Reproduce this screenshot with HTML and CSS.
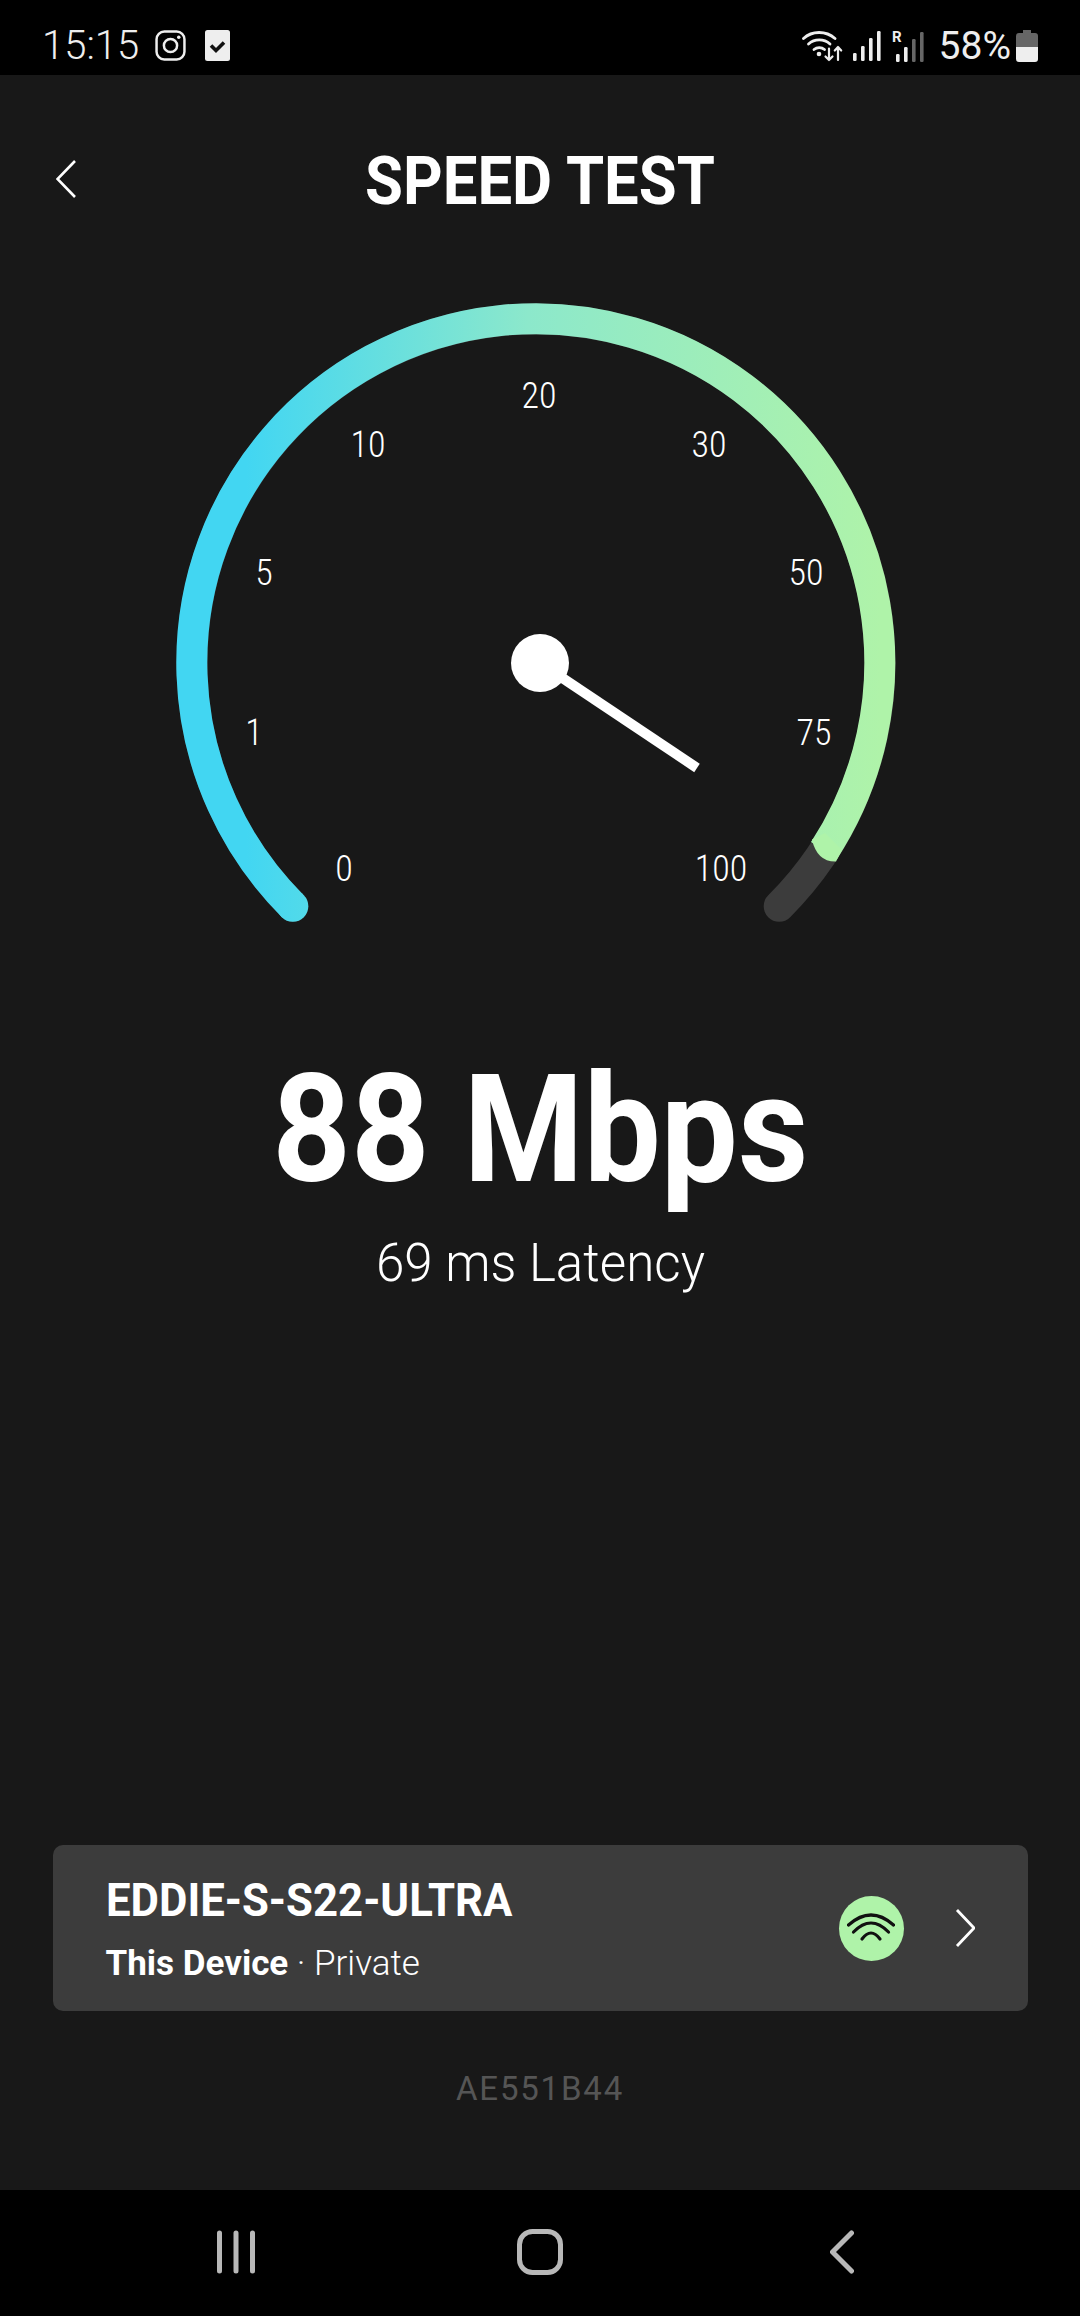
FILE: index.html
```html
<!DOCTYPE html>
<html lang="en">
<head>
  <meta charset="UTF-8">
  <title>Speed Test</title>
  <meta name="viewport" content="width=device-width, initial-scale=1.0">
  <link rel="stylesheet" href="styles.css">
</head>
<body>
  <div class="screen">
    <div class="status-bar">
      <span class="clock">15:15</span>
      <svg class="insta" viewBox="0 0 30 30"><rect x="1.500" y="1.500" width="27" height="27" rx="7.500" fill="none" stroke="#eee" stroke-width="2.400"/><circle cx="15" cy="15" r="6.400" fill="none" stroke="#eee" stroke-width="2.400"/><circle cx="23" cy="7" r="1.700" fill="#eee"/></svg>
      <svg class="check" viewBox="0 0 25 31"><rect width="25" height="31" rx="2.500" fill="#eee"/><path d="M6 15.500l5 5 8-8" fill="none" stroke="#111" stroke-width="3.600"/></svg>
      <div class="status-right">
        <svg class="wifi" viewBox="0 0 42 32">
          <g fill="none" stroke="#eee" stroke-width="2.800" stroke-linecap="round">
            <path d="M1.500 8.500C10 .5 24 .5 33 8.500"/>
            <path d="M6.500 14C12.500 8.500 22 8.500 28 14"/>
            <path d="M12 19.500C15 17 19.500 17 22.500 19.500"/>
          </g>
          <circle cx="17" cy="24" r="2.300" fill="#eee"/>
          <g fill="none" stroke="#eee" stroke-width="2.200" stroke-linecap="round" stroke-linejoin="round">
            <path d="M27 18.500V30M23.500 26.500L27 30l3.500-3.500"/>
            <path d="M36 30V17M32.800 20.500L36 17l3.200 3.500"/>
          </g>
        </svg>
        <svg class="signal" viewBox="0 0 28 30" fill="#eee"><rect x="0" y="22" width="3.600" height="8" rx="1.200"/><rect x="8" y="15" width="3.600" height="15" rx="1.200"/><rect x="16" y="7" width="3.600" height="23" rx="1.200"/><rect x="24" y="0" width="3.600" height="30" rx="1.200"/></svg>
        <svg class="signal-r" viewBox="0 -6 32 38">
          <text x="0" y="12" class="roam">R</text>
          <g fill="#eee"><rect x="4" y="24" width="3.600" height="8" rx="1.200"/><rect x="12" y="17" width="3.600" height="15" rx="1.200"/></g>
          <g fill="#666"><rect x="20" y="9" width="3.600" height="23" rx="1.200"/><rect x="28" y="2" width="3.600" height="30" rx="1.200"/></g>
        </svg>
        <span class="battery-text">58%</span>
        <svg class="battery" viewBox="0 0 22 32"><path d="M7 0h8v3h4a3 3 0 0 1 3 3v11H0V6a3 3 0 0 1 3-3h4z" fill="#666"/><path d="M0 17h22v12a3 3 0 0 1-3 3H3a3 3 0 0 1-3-3z" fill="#eee"/></svg>
      </div>
    </div>

    <header class="top-bar">
      <svg class="back" viewBox="0 0 20 38"><path d="M19 1L1.500 19 19 37" fill="none" stroke="#fff" stroke-width="2.600"/></svg>
      <h1>SPEED TEST</h1>
    </header>

    <svg class="gauge" viewBox="0 280 1080 660">
      <defs>
        <linearGradient id="arc" gradientUnits="userSpaceOnUse" x1="176" y1="0" x2="880" y2="0">
          <stop offset="0.1" stop-color="#42d6f2"/>
          <stop offset="0.5" stop-color="#8ce8cb"/>
          <stop offset="1" stop-color="#aff3a9"/>
        </linearGradient>
      </defs>
      <path d="M292.800 906.200A344 344 0 1 1 779.200 906.200" fill="none" stroke="#3c3c3c" stroke-width="31" stroke-linecap="round"/>
      <path d="M292.800 906.200A344 344 0 1 1 824 850.500" fill="none" stroke="url(#arc)" stroke-width="31"/>
      <circle cx="292.800" cy="906.200" r="15.500" fill="url(#arc)"/>
      <path d="M812 839.500Q817 862 836 861.500L842 850 825 833z" fill="#aff3a9"/>
      <g class="ticks">
        <text x="344" y="881">0</text>
        <text x="254" y="745">1</text>
        <text x="264" y="585">5</text>
        <text x="368" y="457">10</text>
        <text x="539" y="408">20</text>
        <text x="709" y="457">30</text>
        <text x="806" y="585">50</text>
        <text x="814" y="745">75</text>
        <text x="721" y="881">100</text>
      </g>
      <line x1="540" y1="663" x2="697" y2="768" stroke="#fff" stroke-width="10"/>
      <circle cx="540" cy="663" r="29" fill="#fff"/>
    </svg>

    <div class="speed">88 Mbps</div>
    <div class="latency">69 ms Latency</div>

    <div class="device-card">
      <div class="device-info">
        <div class="device-name">EDDIE-S-S22-ULTRA</div>
        <div class="device-sub"><b>This Device</b> · Private</div>
      </div>
      <div class="wifi-badge">
        <svg viewBox="0 0 48 32"><g fill="none" stroke="#111" stroke-width="3.200" stroke-linecap="round"><path d="M1.500 13Q24-7 46.500 13"/><path d="M6.500 20Q24 2 41.500 20"/><path d="M15 27Q24 15 33 27"/></g></svg>
      </div>
      <svg class="chev" viewBox="0 0 20 38"><path d="M2 1l17 18L2 37" fill="none" stroke="#fff" stroke-width="2.800"/></svg>
    </div>
    <div class="device-id">AE551B44</div>

    <nav class="nav-bar">
      <svg class="nav-recents" viewBox="0 0 38 44"><g stroke="#b8b8b8" stroke-width="5" stroke-linecap="round"><path d="M2.500 3v38M19 3v38M35.500 3v38"/></g></svg>
      <svg class="nav-home" viewBox="0 0 46 46"><rect x="2.500" y="2.500" width="41" height="41" rx="13" fill="none" stroke="#b8b8b8" stroke-width="5"/></svg>
      <svg class="nav-back" viewBox="0 0 24 44"><path d="M21.500 3L2.500 22l19 19" fill="none" stroke="#b8b8b8" stroke-width="5" stroke-linecap="round" stroke-linejoin="round"/></svg>
    </nav>
  </div>
</body>
</html>
```

FILE: styles.css
```css
* {
  margin: 0;
  padding: 0;
  box-sizing: border-box;
}

body {
  background: #181818;
  color: #fff;
  font-family: Roboto, sans-serif;
}

svg {
  display: block;
}

.screen {
  height: 2316px;
  display: flex;
  flex-direction: column;
  align-items: center;
}

.status-bar {
  width: 100%;
  height: 75px;
  background: #000;
  color: #eee;
  display: flex;
  align-items: center;
  padding: 16px 42px 0 42px;
  flex-shrink: 0;
}

.clock {
  width: 113px;
  font-size: 40px;
  font-weight: 300;
}

.insta {
  width: 31px;
  height: 31px;
  margin-right: 19px;
}

.check {
  width: 25px;
  height: 31px;
}

.status-right {
  margin-left: auto;
  display: flex;
  align-items: center;
}

.wifi {
  width: 42px;
  height: 32px;
  margin-right: 9px;
}

.signal {
  width: 28px;
  height: 30px;
  margin-right: 11px;
}

.signal-r {
  width: 32px;
  height: 38px;
  margin: -6px 15px 0 0;
}

.roam {
  font-family: Roboto, sans-serif;
  font-size: 15px;
  font-weight: 700;
  fill: #eee;
}

.battery-text {
  font-size: 39px;
  font-weight: 400;
  margin-right: 5px;
}

.battery {
  width: 22px;
  height: 32px;
}

.top-bar {
  width: 100%;
  height: 205px;
  padding-top: 70px;
  position: relative;
  flex-shrink: 0;
}

.top-bar h1 {
  font-size: 67px;
  font-weight: 700;
  transform: scaleX(0.92);
  text-align: center;
  line-height: 72px;
}

.back {
  position: absolute;
  left: 56px;
  top: 85px;
  width: 20px;
  height: 38px;
}

.gauge {
  width: 1080px;
  height: 660px;
  flex-shrink: 0;
}

.ticks text {
  font-family: Roboto, sans-serif;
  font-size: 36px;
  font-weight: 300;
  font-stretch: 75%;
  fill: #fff;
  text-anchor: middle;
}

.speed {
  margin-top: 102px;
  font-size: 150px;
  font-weight: 700;
  transform: scaleX(0.914);
  line-height: 176px;
}

.latency {
  margin-top: 15px;
  font-size: 53px;
  font-weight: 300;
  transform: scaleX(0.965);
  line-height: 60px;
}

.device-card {
  margin-top: auto;
  width: 975px;
  height: 166px;
  background: #3c3c3c;
  border-radius: 10px;
  display: flex;
  align-items: center;
  padding: 0 53px;
}

.device-info {
  flex: 1;
}

.device-name {
  font-size: 46px;
  font-weight: 700;
  transform: scaleX(0.95);
  transform-origin: left center;
  line-height: 52px;
  margin-top: 2px;
  margin-bottom: 18px;
}

.device-sub {
  font-size: 35px;
  font-weight: 300;
  line-height: 40px;
}

.device-sub b {
  font-weight: 700;
}

.wifi-badge {
  width: 65px;
  height: 65px;
  border-radius: 50%;
  background: #aff3a9;
  display: flex;
  align-items: center;
  justify-content: center;
  margin-right: 51px;
}

.wifi-badge svg {
  width: 48px;
  height: 32px;
}

.chev {
  width: 20px;
  height: 38px;
}

.device-id {
  margin-top: 58px;
  margin-bottom: 81px;
  font-size: 33px;
  line-height: 40px;
  color: #555;
  letter-spacing: 1.8px;
}

.nav-bar {
  width: 100%;
  height: 126px;
  background: #000;
  flex-shrink: 0;
  display: flex;
  align-items: center;
  padding: 0 0 2px 217px;
}

.nav-recents {
  width: 38px;
  height: 44px;
  margin-right: 262px;
}

.nav-home {
  width: 46px;
  height: 46px;
  margin-right: 267px;
}

.nav-back {
  width: 24px;
  height: 44px;
}
```
